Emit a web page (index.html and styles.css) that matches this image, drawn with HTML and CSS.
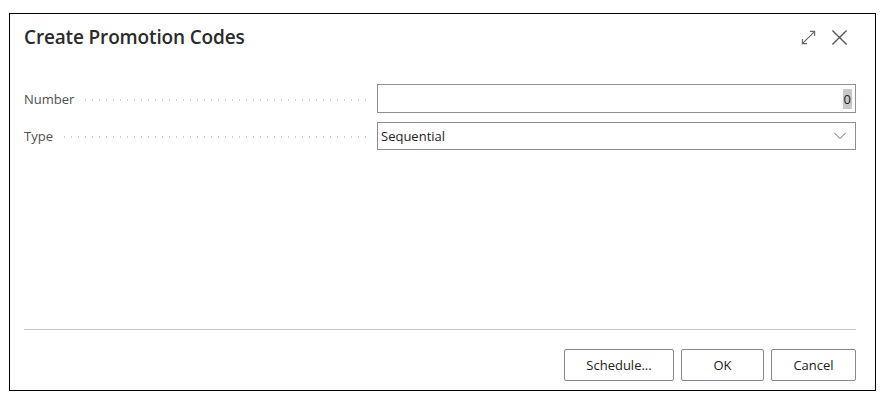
FILE: index.html
```html
<!DOCTYPE html>
<html>
<head>
<meta charset="utf-8">
<link rel="stylesheet" href="styles.css">
</head>
<body>
<div class="dialog">
  <div class="header">
    <h1 class="title">Create Promotion Codes</h1>
    <div class="header-icons">
      <svg class="icon-expand" width="18" height="18" viewBox="0 0 18 18" fill="none" stroke="#666" stroke-width="1.2">
        <path d="M2.5 15.5 L15.5 2.5"/>
        <path d="M2.5 10.5 V15.5 H7.5"/>
        <path d="M10.5 2.5 H15.5 V7.5"/>
      </svg>
      <svg class="icon-close" width="18" height="18" viewBox="0 0 18 18" fill="none" stroke="#555" stroke-width="1.4">
        <path d="M1.5 1.5 L16.5 16.5 M16.5 1.5 L1.5 16.5"/>
      </svg>
    </div>
  </div>
  <div class="form">
    <div class="row">
      <span class="label">Number</span>
      <span class="leader"></span>
      <div class="field num"><span class="sel">0</span></div>
    </div>
    <div class="row">
      <span class="label">Type</span>
      <span class="leader"></span>
      <div class="field select"><span>Sequential</span>
        <svg width="12" height="8" viewBox="0 0 12 8" fill="none" stroke="#666" stroke-width="1"><path d="M0.5 1 L6 6.5 L11.5 1"/></svg>
      </div>
    </div>
  </div>
  <div class="spacer"></div>
  <div class="sep"></div>
  <div class="footer">
    <button class="btn btn-schedule">Schedule...</button>
    <button class="btn btn-ok">OK</button>
    <button class="btn btn-cancel">Cancel</button>
  </div>
</div>
</body>
</html>
```
FILE: styles.css
```css
html, body {
  margin: 0;
  padding: 0;
  background: #fff;
}
body {
  font-family: "Segoe UI", "Open Sans", "Noto Sans", sans-serif;
  color: #212121;
}
.dialog {
  box-sizing: border-box;
  margin: 13px 0 0 9px;
  width: 867px;
  height: 378px;
  border: 1.5px solid #000;
  display: flex;
  flex-direction: column;
  padding: 0 19px 0 14px;
  background: #fff;
}
.header {
  display: flex;
  align-items: center;
  justify-content: space-between;
  height: 46px;
}
.title {
  margin: 0;
  font-size: 19px;
  font-weight: 600;
  color: #2b2b2b;
  letter-spacing: -0.15px;
}
.header-icons {
  display: flex;
  align-items: center;
  gap: 14px;
  margin-right: 8px;
}
.icon-expand { width: 17px; height: 17px; }
.icon-close { width: 17px; height: 17px; }
.form {
  margin-top: 24px;
  display: flex;
  flex-direction: column;
  gap: 8px;
}
.row {
  display: flex;
  align-items: center;
  height: 29px;
}
.label {
  font-size: 13px;
  color: #505050;
  margin-right: 8px;
}
.leader {
  flex: 1;
  height: 2px;
  margin-right: 7px;
  background-image: radial-gradient(circle, #cfcfcf 0.8px, transparent 1px);
  background-size: 7px 2px;
  background-repeat: repeat-x;
  margin-top: 2px;
}
.field {
  box-sizing: border-box;
  width: 479px;
  height: 29px;
  border: 1px solid #8a8f98;
  display: flex;
  align-items: center;
  font-size: 13px;
  color: #212121;
}
.field.num {
  justify-content: flex-end;
  padding-right: 3px;
}
.sel {
  background: #c8c8c8;
  padding: 1px 1px;
  line-height: 18px;
}
.field.select {
  justify-content: space-between;
  padding: 0 9px 0 3px;
  height: 28px;
}
.spacer { flex: 1; }
.sep {
  height: 1px;
  background: #c8c8c8;
}
.footer {
  display: flex;
  justify-content: flex-end;
  gap: 7px;
  padding: 19px 0 9px 0;
}
.btn {
  box-sizing: border-box;
  height: 32px;
  border: 1px solid #8a8886;
  border-radius: 2px;
  background: #fff;
  font-family: inherit;
  font-size: 13px;
  color: #212121;
  padding: 0;
}
.btn-schedule { width: 110px; }
.btn-ok { width: 83px; }
.btn-cancel { width: 85px; }
```
